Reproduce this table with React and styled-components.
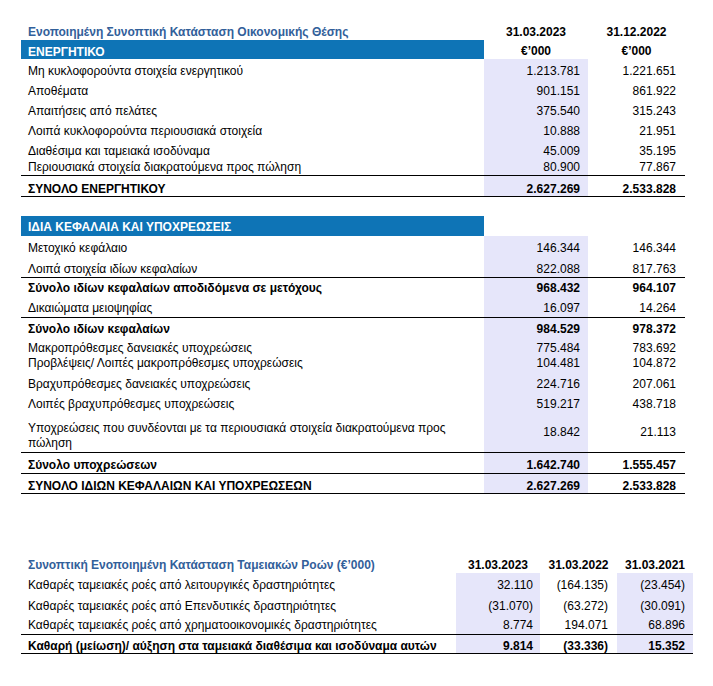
import React from 'react';
import styled, {createGlobalStyle} from 'styled-components';

const GlobalStyle = createGlobalStyle`
  body {
    margin: 0;
    background: #ffffff;
    color: #000000;
    font-family: "Liberation Sans", Arial, sans-serif;
    font-size: 12px;
  }
`;

const Sheet = styled.div`
  width: 713px;
  box-sizing: border-box;
  padding: 20px 0 0 21px;
`;

const Block = styled.section`
  display: flex;
  flex-direction: column;
  width: ${(props) => props.width}px;
  margin-top: ${(props) => props.gap || 0}px;
`;

const Row = styled.div`
  display: grid;
  grid-template-columns: ${(props) => props.cols};
  height: ${(props) => props.h}px;
  box-sizing: border-box;
  border-top: ${(props) => (props.lineTop ? '1px solid #000' : 'none')};
  border-bottom: ${(props) => (props.lineBottom ? '1px solid #000' : 'none')};
  font-weight: ${(props) => (props.bold ? 700 : 400)};
`;

const Cell = styled.div`
  display: flex;
  align-items: ${(props) => (props.middle ? 'center' : 'flex-end')};
  justify-content: ${(props) => {
    if (props.align === 'right') return 'flex-end';
    if (props.align === 'center') return 'center';
    return 'flex-start';
  }};
  padding: 0 ${(props) => props.pr || 0}px ${(props) => (props.middle ? 0 : props.pb || 0)}px ${(props) => props.pl || 0}px;
  background: ${(props) => (props.shade ? '#e6e6fa' : 'transparent')};
  line-height: 14px;
  white-space: nowrap;
`;

const Label = styled(Cell)`
  white-space: normal;
`;

const Wrapped = styled.span`
  display: block;
  line-height: 15px;
`;

const Title = styled(Cell)`
  color: #32609a;
  font-weight: 700;
`;

const Bar = styled(Cell)`
  background: #0e74b6;
  color: #ffffff;
  font-weight: 700;
`;

const BS_COLS = '463px 104px 97px';
const CF_COLS = '435px 84px 77px 76px';

const assets = [
  {label: 'Μη κυκλοφορούντα στοιχεία ενεργητικού', a: '1.213.781', b: '1.221.651', h: 20, pb: 1},
  {label: 'Αποθέματα', a: '901.151', b: '861.922', h: 20, pb: 1},
  {label: 'Απαιτήσεις από πελάτες', a: '375.540', b: '315.243', h: 20, pb: 1},
  {label: 'Λοιπά κυκλοφορούντα περιουσιακά στοιχεία', a: '10.888', b: '21.951', h: 20, pb: 1},
  {label: 'Διαθέσιμα και ταμειακά ισοδύναμα', a: '45.009', b: '35.195', h: 20, pb: 1},
  {label: 'Περιουσιακά στοιχεία διακρατούμενα προς πώληση', a: '80.900', b: '77.867', h: 16, pb: 1},
  {label: 'ΣΥΝΟΛΟ ΕΝΕΡΓΗΤΙΚΟΥ', a: '2.627.269', b: '2.533.828', h: 22, pb: 0, bold: true, top: true, bottom: true},
];

const equity = [
  {label: 'Μετοχικό κεφάλαιο', a: '146.344', b: '146.344', h: 20, pb: 1},
  {label: 'Λοιπά στοιχεία ιδίων κεφαλαίων', a: '822.088', b: '817.763', h: 21, pb: 1},
  {label: 'Σύνολο ιδίων κεφαλαίων αποδιδόμενα σε μετόχους', a: '968.432', b: '964.107', h: 20, pb: 2, bold: true, top: true},
  {label: 'Δικαιώματα μειοψηφίας', a: '16.097', b: '14.264', h: 20, pb: 2},
  {label: 'Σύνολο ιδίων κεφαλαίων', a: '984.529', b: '978.372', h: 20, pb: 1, bold: true, top: true},
  {label: 'Μακροπρόθεσμες δανειακές υποχρεώσεις', a: '775.484', b: '783.692', h: 18, pb: 0},
  {label: 'Προβλέψεις/ Λοιπές μακροπρόθεσμες υποχρεώσεις', a: '104.481', b: '104.872', h: 15, pb: 0},
  {label: 'Βραχυπρόθεσμες δανειακές υποχρεώσεις', a: '224.716', b: '207.061', h: 21, pb: 0},
  {label: 'Λοιπές βραχυπρόθεσμες υποχρεώσεις', a: '519.217', b: '438.718', h: 20, pb: 0},
  {
    label: (
      <Wrapped>
        Υποχρεώσεις που συνδέονται με τα περιουσιακά στοιχεία διακρατούμενα προς
        <br />
        πώληση
      </Wrapped>
    ),
    a: '18.842',
    b: '21.113',
    h: 41,
    pb: 1,
    middle: true,
  },
  {label: 'Σύνολο υποχρεώσεων', a: '1.642.740', b: '1.555.457', h: 21, pb: 1, bold: true, top: true},
  {label: 'ΣΥΝΟΛΟ ΙΔΙΩΝ ΚΕΦΑΛΑΙΩΝ ΚΑΙ ΥΠΟΧΡΕΩΣΕΩΝ', a: '2.627.269', b: '2.533.828', h: 21, pb: 0, bold: true, top: true, bottom: true},
];

const cashFlows = [
  {label: 'Καθαρές ταμειακές ροές από λειτουργικές δραστηριότητες', v: ['32.110', '(164.135)', '(23.454)'], h: 20, pb: 1},
  {label: 'Καθαρές ταμειακές ροές από Επενδυτικές δραστηριότητες', v: ['(31.070)', '(63.272)', '(30.091)'], h: 20, pb: 0},
  {label: 'Καθαρές ταμειακές ροές από χρηματοοικονομικές δραστηριότητες', v: ['8.774', '194.071', '68.896'], h: 21, pb: 2},
  {label: 'Καθαρή (μείωση)/ αύξηση στα ταμειακά διαθέσιμα και ισοδύναμα αυτών', v: ['9.814', '(33.336)', '15.352'], h: 20, pb: 0, bold: true, top: true, bottom: true},
];

// label stays bottom-aligned; only the figures are centred in the two-line row
const BalanceRow = ({row}) => (
  <Row cols={BS_COLS} h={row.h} bold={row.bold} lineTop={row.top} lineBottom={row.bottom}>
    <Label pl={7} pb={row.pb}>{row.label}</Label>
    <Cell shade align="right" pr={8} pb={row.pb} middle={row.middle}>{row.a}</Cell>
    <Cell align="right" pr={9} pb={row.pb} middle={row.middle}>{row.b}</Cell>
  </Row>
);

const CashRow = ({row}) => (
  <Row cols={CF_COLS} h={row.h} bold={row.bold} lineTop={row.top} lineBottom={row.bottom}>
    <Label pl={7} pb={row.pb}>{row.label}</Label>
    <Cell shade align="right" pr={7} pb={row.pb}>{row.v[0]}</Cell>
    <Cell align="right" pr={9} pb={row.pb}>{row.v[1]}</Cell>
    <Cell shade align="right" pr={8} pb={row.pb}>{row.v[2]}</Cell>
  </Row>
);

const App = () => {
  return (
    <>
      <GlobalStyle />
      <Sheet>
        <Block width={664}>
          <Row cols={BS_COLS} h={20} bold>
            <Title pl={7} pb={1}>Ενοποιημένη Συνοπτική Κατάσταση Οικονομικής Θέσης</Title>
            <Cell align="center" pb={1}>31.03.2023</Cell>
            <Cell align="center" pb={1}>31.12.2022</Cell>
          </Row>
          <Row cols={BS_COLS} h={19} bold>
            <Bar pl={7} pb={0}>ΕΝΕΡΓΗΤΙΚΟ</Bar>
            <Cell align="center" pb={1}>€’000</Cell>
            <Cell align="center" pb={1}>€’000</Cell>
          </Row>
          {assets.map((row, i) => (
            <BalanceRow key={i} row={row} />
          ))}
        </Block>

        <Block width={664} gap={19}>
          <Row cols={BS_COLS} h={20}>
            <Bar pl={7} pb={2}>ΙΔΙΑ ΚΕΦΑΛΑΙΑ ΚΑΙ ΥΠΟΧΡΕΩΣΕΙΣ</Bar>
            <Cell />
            <Cell />
          </Row>
          {equity.map((row, i) => (
            <BalanceRow key={i} row={row} />
          ))}
        </Block>

        <Block width={672} gap={58}>
          <Row cols={CF_COLS} h={21} bold>
            <Title pl={7} pb={1}>Συνοπτική Ενοποιημένη Κατάσταση Ταμειακών Ροών (€’000)</Title>
            <Cell align="center" pb={1}>31.03.2023</Cell>
            <Cell align="center" pb={1}>31.03.2022</Cell>
            <Cell align="center" pb={1}>31.03.2021</Cell>
          </Row>
          {cashFlows.map((row, i) => (
            <CashRow key={i} row={row} />
          ))}
        </Block>
      </Sheet>
    </>
  );
};

export default App;
